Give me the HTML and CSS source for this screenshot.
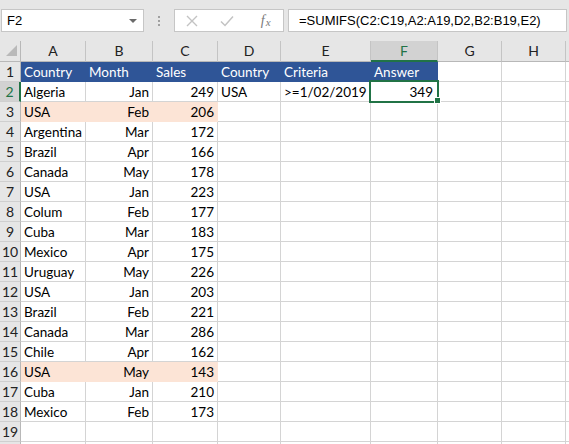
FILE: index.html
```html
<!DOCTYPE html>
<html>
<head>
<meta charset="utf-8">
<link rel="stylesheet" href="styles.css">
</head>
<body>
<div class="app">
  <div class="fbar">
    <div class="namebox"><span class="nb-text">F2</span><span class="nb-arrow"></span></div>
    <div class="dots"><i></i><i></i><i></i></div>
    <div class="btns">
      <span class="btn"><svg width="12" height="12" viewBox="0 0 12 12"><path d="M1 1 L11 11 M11 1 L1 11" stroke="#c3c3c3" stroke-width="1.4" fill="none"/></svg></span>
      <span class="btn"><svg width="14" height="12" viewBox="0 0 14 12"><path d="M1 6.5 L5 10.5 L13 1.5" stroke="#c3c3c3" stroke-width="1.5" fill="none"/></svg></span>
      <span class="btn fx"><span class="fx-f">f</span><span class="fx-x">x</span></span>
    </div>
    <div class="formula">=SUMIFS(C2:C19,A2:A19,D2,B2:B19,E2)</div>
  </div>
  <div class="sheet">
    <div class="corner"><svg width="20" height="20" viewBox="0 0 20 20"><path d="M17 4 L17 15 L6 15 Z" fill="#b9b9b9"/></svg></div>
    <div class="ch">A</div><div class="ch">B</div><div class="ch">C</div><div class="ch">D</div><div class="ch">E</div><div class="ch selcol">F</div><div class="ch">G</div><div class="ch">H</div><div class="ch last"></div>

    <div class="rh">1</div><div class="c blue">Country</div><div class="c blue">Month</div><div class="c blue">Sales</div><div class="c blue">Country</div><div class="c blue">Criteria</div><div class="c blue">Answer</div><div class="c"></div><div class="c"></div><div class="c"></div>

    <div class="rh selrow">2</div><div class="c">Algeria</div><div class="c r">Jan</div><div class="c r">249</div><div class="c">USA</div><div class="c">&gt;=1/02/2019</div><div class="c r active">349</div><div class="c"></div><div class="c"></div><div class="c"></div>

    <div class="rh">3</div><div class="c peach">USA</div><div class="c r peach">Feb</div><div class="c r peach">206</div><div class="c"></div><div class="c"></div><div class="c"></div><div class="c"></div><div class="c"></div><div class="c"></div>

    <div class="rh">4</div><div class="c">Argentina</div><div class="c r">Mar</div><div class="c r">172</div><div class="c"></div><div class="c"></div><div class="c"></div><div class="c"></div><div class="c"></div><div class="c"></div>

    <div class="rh">5</div><div class="c">Brazil</div><div class="c r">Apr</div><div class="c r">166</div><div class="c"></div><div class="c"></div><div class="c"></div><div class="c"></div><div class="c"></div><div class="c"></div>

    <div class="rh">6</div><div class="c">Canada</div><div class="c r">May</div><div class="c r">178</div><div class="c"></div><div class="c"></div><div class="c"></div><div class="c"></div><div class="c"></div><div class="c"></div>

    <div class="rh">7</div><div class="c">USA</div><div class="c r">Jan</div><div class="c r">223</div><div class="c"></div><div class="c"></div><div class="c"></div><div class="c"></div><div class="c"></div><div class="c"></div>

    <div class="rh">8</div><div class="c">Colum</div><div class="c r">Feb</div><div class="c r">177</div><div class="c"></div><div class="c"></div><div class="c"></div><div class="c"></div><div class="c"></div><div class="c"></div>

    <div class="rh">9</div><div class="c">Cuba</div><div class="c r">Mar</div><div class="c r">183</div><div class="c"></div><div class="c"></div><div class="c"></div><div class="c"></div><div class="c"></div><div class="c"></div>

    <div class="rh">10</div><div class="c">Mexico</div><div class="c r">Apr</div><div class="c r">175</div><div class="c"></div><div class="c"></div><div class="c"></div><div class="c"></div><div class="c"></div><div class="c"></div>

    <div class="rh">11</div><div class="c">Uruguay</div><div class="c r">May</div><div class="c r">226</div><div class="c"></div><div class="c"></div><div class="c"></div><div class="c"></div><div class="c"></div><div class="c"></div>

    <div class="rh">12</div><div class="c">USA</div><div class="c r">Jan</div><div class="c r">203</div><div class="c"></div><div class="c"></div><div class="c"></div><div class="c"></div><div class="c"></div><div class="c"></div>

    <div class="rh">13</div><div class="c">Brazil</div><div class="c r">Feb</div><div class="c r">221</div><div class="c"></div><div class="c"></div><div class="c"></div><div class="c"></div><div class="c"></div><div class="c"></div>

    <div class="rh">14</div><div class="c">Canada</div><div class="c r">Mar</div><div class="c r">286</div><div class="c"></div><div class="c"></div><div class="c"></div><div class="c"></div><div class="c"></div><div class="c"></div>

    <div class="rh">15</div><div class="c">Chile</div><div class="c r">Apr</div><div class="c r">162</div><div class="c"></div><div class="c"></div><div class="c"></div><div class="c"></div><div class="c"></div><div class="c"></div>

    <div class="rh">16</div><div class="c peach">USA</div><div class="c r peach">May</div><div class="c r peach">143</div><div class="c"></div><div class="c"></div><div class="c"></div><div class="c"></div><div class="c"></div><div class="c"></div>

    <div class="rh">17</div><div class="c">Cuba</div><div class="c r">Jan</div><div class="c r">210</div><div class="c"></div><div class="c"></div><div class="c"></div><div class="c"></div><div class="c"></div><div class="c"></div>

    <div class="rh">18</div><div class="c">Mexico</div><div class="c r">Feb</div><div class="c r">173</div><div class="c"></div><div class="c"></div><div class="c"></div><div class="c"></div><div class="c"></div><div class="c"></div>

    <div class="rh">19</div><div class="c"></div><div class="c"></div><div class="c"></div><div class="c"></div><div class="c"></div><div class="c"></div><div class="c"></div><div class="c"></div><div class="c"></div>

    <div class="rh"></div><div class="c"></div><div class="c"></div><div class="c"></div><div class="c"></div><div class="c"></div><div class="c"></div><div class="c"></div><div class="c"></div><div class="c"></div>
  </div>
</div>
</body>
</html>
```
FILE: styles.css
```css
html, body {
  margin: 0;
  padding: 0;
  background: #ffffff;
  overflow: hidden;
}
.app {
  width: 569px;
  height: 444px;
  overflow: hidden;
}
.fbar {
  height: 41px;
  box-sizing: border-box;
  background: #e6e6e6;
  padding: 9px 0 0 1px;
  display: flex;
  align-items: flex-start;
  font-family: "Liberation Sans", Arial, sans-serif;
  font-size: 13px;
  color: #000;
}
.namebox {
  width: 143px;
  height: 23px;
  box-sizing: border-box;
  background: #fff;
  border: 1px solid #c6c6c6;
  display: flex;
  align-items: center;
  justify-content: space-between;
  padding: 0 6px 0 5px;
}
.nb-arrow {
  width: 0;
  height: 0;
  border-left: 4px solid transparent;
  border-right: 4px solid transparent;
  border-top: 4px solid #6a6a6a;
  margin-top: 1px;
}
.dots {
  width: 30px;
  height: 23px;
  display: flex;
  flex-direction: column;
  align-items: center;
  justify-content: center;
  gap: 2px;
}
.dots i {
  display: block;
  width: 2px;
  height: 2px;
  background: #a0a0a0;
}
.btns {
  width: 110px;
  height: 23px;
  box-sizing: border-box;
  background: #fff;
  border: 1px solid #c6c6c6;
  display: flex;
  align-items: center;
}
.btn {
  flex: 1;
  display: flex;
  align-items: center;
  justify-content: center;
  height: 100%;
}
.fx {
  font-family: "Liberation Serif", "Times New Roman", serif;
  font-style: italic;
  color: #7a7a7a;
  font-size: 14px;
  padding-left: 4px;
}
.fx-x {
  font-size: 11px;
  margin-left: 1px;
  position: relative;
  top: 1px;
}
.formula {
  margin-left: 4px;
  width: 279px;
  height: 23px;
  box-sizing: border-box;
  background: #fff;
  border: 1px solid #c6c6c6;
  padding: 0 0 0 10px;
  line-height: 21px;
  white-space: nowrap;
}
.sheet {
  display: grid;
  grid-template-columns: 21px 65px 67px 65px 63px 90px 67px 64px 64px 1fr;
  grid-template-rows: 21px repeat(20, 20px);
  font-family: Lato, "Liberation Sans", sans-serif;
  font-size: 13.5px;
  color: #000;
}
.corner {
  background: #e6e6e6;
  border-right: 1px solid #b8b8b8;
  border-bottom: 1px solid #b8b8b8;
  box-sizing: border-box;
}
.corner svg {
  display: block;
}
.ch {
  background: #e6e6e6;
  border-right: 1px solid #c4c4c4;
  border-bottom: 1px solid #b8b8b8;
  box-sizing: border-box;
  text-align: center;
  line-height: 20px;
  font-size: 14px;
  color: #222;
}
.ch.selcol {
  background: #d2d2d2;
  color: #217346;
  border-bottom: 2px solid #217346;
  line-height: 19px;
}
.ch.last {
  border-right: none;
}
.rh {
  background: #e6e6e6;
  border-right: 1px solid #b8b8b8;
  border-bottom: 1px solid #cfcfcf;
  box-sizing: border-box;
  text-align: center;
  line-height: 20px;
  font-size: 14px;
  color: #222;
}
.rh.selrow {
  background: #d2d2d2;
  color: #217346;
  border-right: 2px solid #217346;
}
.c {
  border-right: 1px solid #d4d4d4;
  border-bottom: 1px solid #d4d4d4;
  box-sizing: border-box;
  padding: 0 3px 0 3px;
  line-height: 20px;
  white-space: nowrap;
  overflow: hidden;
}
.c.r {
  text-align: right;
}
.c.blue {
  background: #2f5597;
  color: #ffffff;
  border-color: #2f5597;
}
.c.peach {
  background: #fce4d6;
  border-right-color: #fce4d6;
  border-bottom-color: #fce4d6;
}
.c.active {
  position: relative;
  overflow: visible;
  padding-right: 4px;
}
.c.active::after {
  content: "";
  position: absolute;
  left: -2px;
  top: -2px;
  right: -2px;
  bottom: -2px;
  border: 2px solid #217346;
  box-sizing: border-box;
  pointer-events: none;
}
.c.active::before {
  content: "";
  position: absolute;
  left: 63px;
  top: 15px;
  width: 5px;
  height: 5px;
  background: #217346;
  border: 1px solid #ffffff;
  z-index: 2;
}
```
